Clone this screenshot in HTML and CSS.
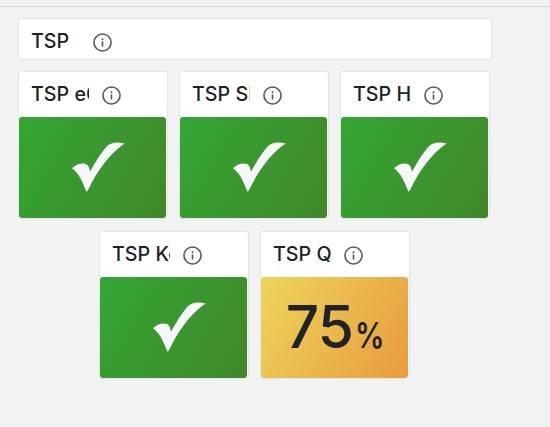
FILE: index.html
```
<!DOCTYPE html>
<html lang="en">
<head>
  <meta charset="UTF-8">
  <meta name="viewport" content="width=device-width, initial-scale=1.0">
  <title>TSP</title>
  <link rel="stylesheet" href="styles.css">
</head>
<body>

<!-- shared icons -->
<svg class="icons">
  <symbol id="info" viewBox="0 0 20 20">
    <circle cx="10" cy="10" r="9" fill="none" stroke="currentColor" stroke-width="1.7"/>
    <circle cx="10" cy="6.6" r="1.05" fill="currentColor"/>
    <path d="M10 9.6V13.6" stroke="currentColor" stroke-width="1.7" stroke-linecap="round"/>
  </symbol>
  <symbol id="check" viewBox="36 35 159 149">
    <path d="M36 113C46 104 56 99 68 99C81 98 88 106 90 124C106 94 124 66 138 50C150 37 168 33 194 39C163 59 132 95 107 136C98 151 90 167 83 181Q80 185 78 181C66 149 56 128 36 113Z" fill="currentColor"/>
  </symbol>
</svg>

<div class="dashboard">
  <div class="panel panel-wide">
    <div class="panel-header">
      <h2 class="title title-wide">TSP</h2>
      <svg class="info"><use href="#info"/></svg>
    </div>
  </div>

  <div class="row">
    <div class="panel">
      <div class="panel-header">
        <h2 class="title">TSP eC</h2>
        <svg class="info"><use href="#info"/></svg>
      </div>
      <div class="stat ok"><svg class="check"><use href="#check"/></svg></div>
    </div>
    <div class="panel">
      <div class="panel-header">
        <h2 class="title">TSP SI</h2>
        <svg class="info"><use href="#info"/></svg>
      </div>
      <div class="stat ok"><svg class="check"><use href="#check"/></svg></div>
    </div>
    <div class="panel">
      <div class="panel-header">
        <h2 class="title">TSP H</h2>
        <svg class="info"><use href="#info"/></svg>
      </div>
      <div class="stat ok"><svg class="check"><use href="#check"/></svg></div>
    </div>
  </div>

  <div class="row row-offset">
    <div class="panel">
      <div class="panel-header">
        <h2 class="title">TSP Ko</h2>
        <svg class="info"><use href="#info"/></svg>
      </div>
      <div class="stat ok"><svg class="check"><use href="#check"/></svg></div>
    </div>
    <div class="panel">
      <div class="panel-header">
        <h2 class="title">TSP Q</h2>
        <svg class="info"><use href="#info"/></svg>
      </div>
      <div class="stat warning"><span class="value">75</span><span class="unit">%</span></div>
    </div>
  </div>
</div>

</body>
</html>
```

FILE: styles.css
```
* {
  box-sizing: border-box;
}

body {
  margin: 0;
  padding-top: 6px;
  background-color: #f1f3f3;
  color: #202227;
  font-family: Inter, sans-serif;
}

.icons {
  display: none;
}

.dashboard {
  border-top: 1px solid #d7d9d9;
  padding: 11px 18px 0;
}

.panel {
  width: 150px;
  height: 148px;
  background-color: white;
  border: 1px solid #e4e6e6;
  border-radius: 3px;
}

.panel-wide {
  width: 474px;
  height: 42px;
}

.panel-header {
  display: flex;
  height: 45px;
  padding: 9px 0 0 12px;
}

.row {
  display: flex;
  gap: 11px;
  margin-top: 11px;
}

.row-offset {
  margin-top: 12px;
  padding-left: 81px;
}

.title {
  width: 58.4px;
  height: 26px;
  margin: 0 12.3px 0 0;
  overflow: hidden;
  white-space: nowrap;
  font-size: 19.7px;
  font-weight: 500;
  line-height: 26px;
}

.title-wide {
  width: 49.6px;
}

.info {
  width: 19px;
  height: 19px;
  margin-top: 4.5px;
  color: #56585d;
}

.stat {
  display: flex;
  justify-content: center;
  width: 147px;
  height: 101px;
  border-radius: 3px;
}

/* second row tiles sit one pixel further in */
.row-offset .stat {
  margin-left: 0.4px;
}

.ok {
  background: linear-gradient(120deg, #33a634, #428729);
}

.warning {
  align-items: baseline;
  background: linear-gradient(120deg, #edd55c, #e99b3f);
}

.check {
  width: 53px;
  height: 50px;
  margin: 24.5px 0 0 12px;
  color: #f7f8fa;
}

.value {
  margin-left: 6px;
  font-size: 58.5px;
  font-weight: 550;
  line-height: 99px;
  letter-spacing: -1px;
}

.unit {
  margin-left: 2px;
  font-size: 35px;
  font-weight: 600;
  transform: scaleX(0.84);
  transform-origin: left;
}
```
